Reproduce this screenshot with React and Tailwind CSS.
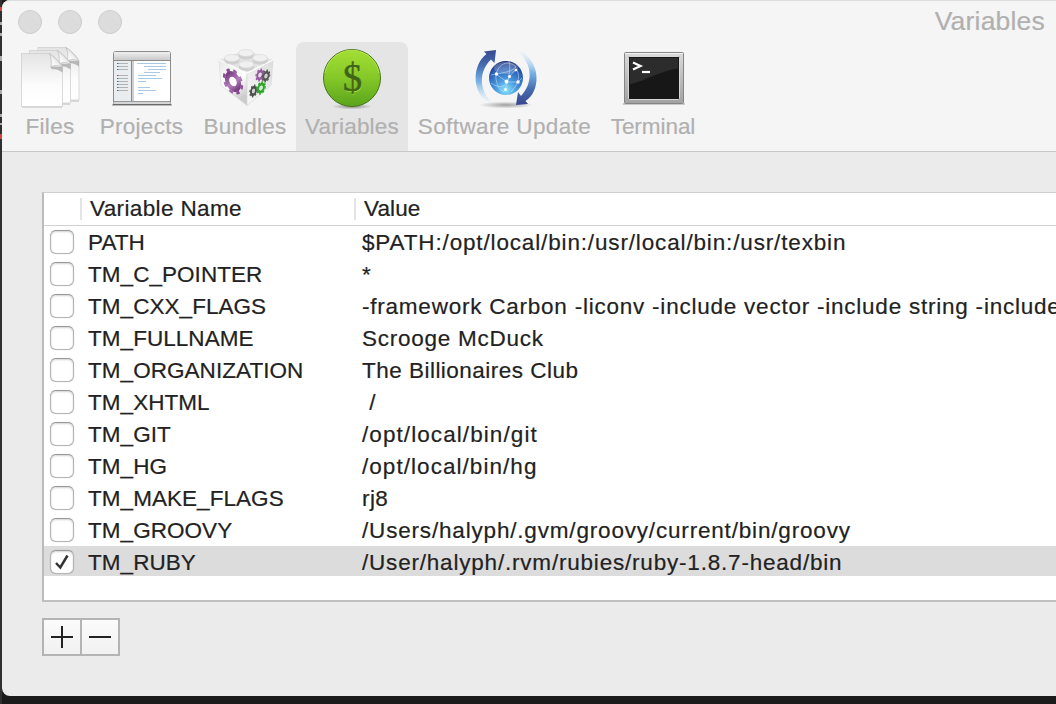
const rows = [
  { name: "PATH", value: "$PATH:/opt/local/bin:/usr/local/bin:/usr/texbin", spacing: "tracking-[0.85px]" },
  { name: "TM_C_POINTER", value: "*", spacing: "tracking-[0px]" },
  { name: "TM_CXX_FLAGS", value: "-framework Carbon -liconv -include vector -include string -include", spacing: "tracking-[0.77px]" },
  { name: "TM_FULLNAME", value: "Scrooge McDuck", spacing: "tracking-[0.75px]" },
  { name: "TM_ORGANIZATION", value: "The Billionaires Club", spacing: "tracking-[0.48px]" },
  { name: "TM_XHTML", value: " /", spacing: "tracking-[0.9px]" },
  { name: "TM_GIT", value: "/opt/local/bin/git", spacing: "tracking-[1.08px]" },
  { name: "TM_HG", value: "/opt/local/bin/hg", spacing: "tracking-[1.05px]" },
  { name: "TM_MAKE_FLAGS", value: "rj8", spacing: "tracking-[0.4px]" },
  { name: "TM_GROOVY", value: "/Users/halyph/.gvm/groovy/current/bin/groovy", spacing: "tracking-[0.82px]" },
  { name: "TM_RUBY", value: "/User/halyph/.rvm/rubies/ruby-1.8.7-head/bin", spacing: "tracking-[0.8px]", selected: true },
];

function Page({ x, y, h }) {
  return (
    <g transform={`translate(${x} ${y})`}>
      <path d={`M0 0H28C31 2 40 10 41 14V${h}H0Z`} fill="url(#paper)" stroke="#cdcdcd" strokeWidth="0.7" />
      <path d="M29 13L41 13.500V19C38 16.500 34 15.500 30 15.500Z" fill="#666" opacity="0.4" />
      <path d="M28 0C30 4 30 9 29.500 13.500C33 11.500 37 11.500 41 14C40 10 33 3 28 0Z" fill="url(#curl)" stroke="#b0b0b0" strokeWidth="0.6" />
    </g>
  );
}

function FilesIcon() {
  return (
    <svg width="64" height="68" viewBox="18 44 64 68">
      <defs>
        <linearGradient id="paper" x1="0" y1="0" x2="0" y2="1">
          <stop offset="0" stopColor="#e4e4e4" />
          <stop offset="0.6" stopColor="#fcfcfc" />
          <stop offset="1" stopColor="#fff" />
        </linearGradient>
        <linearGradient id="curl" x1="0" y1="1" x2="1" y2="0">
          <stop offset="0" stopColor="#fff" />
          <stop offset="0.4" stopColor="#f4f4f4" />
          <stop offset="1" stopColor="#a8a8a8" />
        </linearGradient>
      </defs>
      <path d="M22 107H62M62 104H70M70 101H79" stroke="#bbb" strokeWidth="1" />
      <Page x={38} y={47.5} h={52.5} />
      <Page x={29.5} y={50.5} h={52.5} />
      <Page x={21.5} y={53.5} h={53} />
    </svg>
  );
}

const codeLines = [
  [137, 63, 166], [144, 66, 166], [148, 69, 166], [144, 72, 160], [138, 75, 156],
  [138, 78, 162], [138, 81, 146], [138, 87, 150], [138, 90, 156], [138, 93, 143],
];

function ProjectsIcon() {
  return (
    <svg width="64" height="68" viewBox="110 44 64 68">
      <defs>
        <linearGradient id="bar" x1="0" y1="0" x2="0" y2="1">
          <stop offset="0" stopColor="#f0f0f0" />
          <stop offset="1" stopColor="#c9c9c9" />
        </linearGradient>
      </defs>
      <path d="M112 105H172" stroke="#aaa" strokeWidth="1.5" />
      <rect x="113.5" y="51.5" width="57" height="53" rx="2" fill="#fff" stroke="#8b8b8b" />
      <rect x="114" y="52" width="56" height="8" rx="1" fill="url(#bar)" />
      <path d="M114 60.5H170" stroke="#8c8c8c" />
      <rect x="114" y="61" width="17" height="40" fill="#e9edf0" />
      <rect x="131" y="61" width="3" height="40" fill="#cfcfcf" />
      <path d="M131.5 61V101" stroke="#888" />
      <rect x="114" y="101" width="56" height="3" fill="#d5d5d5" />
      <path d="M114 101.5H170" stroke="#999" />
      <path d="M113 104.5H171" stroke="#686868" />
      {[63, 66, 69, 75, 78, 81, 84, 87, 90].map((y) => (
        <g key={y}>
          <path d={`M118 ${y + 0.5}H128`} stroke="#b0b3b6" />
          <path d={`M117 ${y + 0.5}H118.4`} stroke={y === 75 ? "#c0392b" : "#2a7ab5"} />
        </g>
      ))}
      {codeLines.map(([a, y, b]) => (
        <path key={y} d={`M${a} ${y + 0.5}H${b}`} stroke="#a9c8e6" />
      ))}
    </svg>
  );
}

function Gear({ x, y, r, sx, color, skew, hole }) {
  return (
    <g transform={`translate(${x} ${y}) skewY(${skew}) scale(${sx} 1)`}>
      <circle r={r * 0.6} fill="none" stroke={color} strokeWidth={r * 0.46} />
      <circle r={r * 0.9} fill="none" stroke={color} strokeWidth={r * 0.26} strokeDasharray={`${r * 0.3534} ${r * 0.3534}`} />
      <circle r={r * 0.36} fill={hole} opacity="0.9" />
    </g>
  );
}

function Stud({ x, y }) {
  return (
    <g>
      <path d={`M${x - 7.5} ${y}V${y + 3}A7.5 3.6 0 0 0 ${x + 7.5} ${y + 3}V${y}Z`} fill="#cfcfcf" />
      <ellipse cx={x} cy={y} rx="7.5" ry="3.5" fill="#f0f0f0" stroke="#d6d6d6" strokeWidth="0.6" />
    </g>
  );
}

function BundlesIcon() {
  return (
    <svg width="64" height="68" viewBox="213 44 64 68">
      <defs>
        <linearGradient id="brickL" x1="0" y1="0" x2="0.4" y2="1">
          <stop offset="0" stopColor="#e8e8e8" />
          <stop offset="0.6" stopColor="#fff" />
          <stop offset="1" stopColor="#ccc" />
        </linearGradient>
        <linearGradient id="brickR" x1="1" y1="0" x2="0.4" y2="1">
          <stop offset="0" stopColor="#dcdcdc" />
          <stop offset="1" stopColor="#f6f6f6" />
        </linearGradient>
        <linearGradient id="plum" x1="0" y1="0" x2="1" y2="1">
          <stop offset="0" stopColor="#71347a" />
          <stop offset="0.55" stopColor="#b27fba" />
          <stop offset="1" stopColor="#6f2c79" />
        </linearGradient>
      </defs>
      <path d="M219 60L246 50L273 60L247 73Z" fill="#e3e3e3" />
      <path d="M219 60L247 73V105.500L221 85.500Z" fill="url(#brickL)" stroke="#d8d8d8" strokeWidth="0.6" />
      <path d="M273 60L247 73V105.500L271 85.500Z" fill="url(#brickR)" stroke="#d3d3d3" strokeWidth="0.6" />
      <path d="M219 60L247 73L273 60" fill="none" stroke="#fff" strokeWidth="1.2" />
      <Stud x={246} y={53} />
      <Stud x={232} y={58} />
      <Stud x={260} y={58} />
      <Stud x={246.5} y={64.5} />
      <Gear x={233} y={81.5} r={12} sx={0.82} skew={22} color="url(#plum)" hole="#fff" />
      <Gear x={260} y={75} r={6} sx={0.75} skew={-22} color="#94559d" hole="#e7d5ea" />
      <Gear x={266} y={76} r={6} sx={0.7} skew={-22} color="#555" hole="#ccc" />
      <Gear x={253.5} y={91} r={6} sx={0.7} skew={-22} color="#4c4c4c" hole="#ccc" />
      <Gear x={261} y={88} r={6.3} sx={0.75} skew={-22} color="#2da52b" hole="#c5edc2" />
    </svg>
  );
}

function VariablesIcon() {
  return (
    <svg width="64" height="68" viewBox="320 44 64 68">
      <defs>
        <linearGradient id="coin" x1="0" y1="0" x2="0" y2="1">
          <stop offset="0" stopColor="#a4df35" />
          <stop offset="0.5" stopColor="#84c827" />
          <stop offset="1" stopColor="#5ba41d" />
        </linearGradient>
        <radialGradient id="coinShade">
          <stop offset="0" stopColor="#000" stopOpacity="0.4" />
          <stop offset="1" stopColor="#000" stopOpacity="0" />
        </radialGradient>
      </defs>
      <ellipse cx="352" cy="106.5" rx="20" ry="3" fill="url(#coinShade)" />
      <circle cx="352" cy="78" r="28.5" fill="url(#coin)" stroke="#47761c" strokeWidth="1" />
      <path d="M325 73A27.4 27.4 0 0 1 379 73" fill="none" stroke="#c5f060" strokeWidth="1" opacity="0.6" />
      <text x="353" y="91.800" textAnchor="middle" className="font-['Liberation_Serif',serif] text-[39px]" fill="#a5df4a">$</text>
      <text x="352.400" y="91" textAnchor="middle" className="font-['Liberation_Serif',serif] text-[39px]" fill="#3f6516" stroke="#3f6516" strokeWidth="0.4">$</text>
    </svg>
  );
}

function UpdateIcon() {
  return (
    <svg width="64" height="68" viewBox="473 44 64 68">
      <defs>
        <radialGradient id="globe" cx="0.5" cy="0.85" r="0.85">
          <stop offset="0" stopColor="#8be6fb" />
          <stop offset="0.35" stopColor="#4a9be0" />
          <stop offset="0.75" stopColor="#2c5eb4" />
          <stop offset="1" stopColor="#1b2c6f" />
        </radialGradient>
        <linearGradient id="arcL" x1="0" y1="0" x2="0" y2="1">
          <stop offset="0" stopColor="#37468f" />
          <stop offset="0.3" stopColor="#466eb2" />
          <stop offset="0.6" stopColor="#79b2e6" />
          <stop offset="1" stopColor="#cfe4f8" stopOpacity="0.1" />
        </linearGradient>
        <linearGradient id="arcR" x1="0" y1="1" x2="0" y2="0">
          <stop offset="0" stopColor="#37468f" />
          <stop offset="0.3" stopColor="#466eb2" />
          <stop offset="0.6" stopColor="#79b2e6" />
          <stop offset="1" stopColor="#cfe4f8" stopOpacity="0.1" />
        </linearGradient>
        <radialGradient id="floorShade">
          <stop offset="0" stopColor="#000" stopOpacity="0.35" />
          <stop offset="1" stopColor="#000" stopOpacity="0" />
        </radialGradient>
      </defs>
      <ellipse cx="506" cy="105" rx="27" ry="3.5" fill="url(#floorShade)" />
      <path d="M496 50L484 51.500L486.500 54C473 64 472 88 484 99C486 101 489 103 493 103C479 92 478 72 491 59.500L494.500 63Z" fill="url(#arcL)" />
      <path d="M516 105L528 104L525.500 101C539 92 540 70 529 58C526 54 522 51 517 51C532 62 534 82 521 96L518 92Z" fill="url(#arcR)" />
      <circle cx="506" cy="78" r="17" fill="url(#globe)" />
      <ellipse cx="506" cy="68" rx="12" ry="6" fill="#fff" opacity="0.22" />
      <g fill="none" stroke="#d8efff" strokeWidth="0.7" opacity="0.7">
        <path d="M491 75C500 73 510 73 516 67C510 61 500 61 496 74C495 82 499 90 504 92" />
        <path d="M509 61C511 68 509 77 505 91M496 74L507 82L518 82L522 78M507 82L510 76L516 69C520 74 520 82 511 92M491 83C498 88 504 88 507 82" />
      </g>
      <g fill="#fff">
        <circle cx="496.500" cy="74" r="1.800" />
        <circle cx="509.500" cy="76.500" r="1.600" />
        <circle cx="506.500" cy="81.500" r="1.900" />
        <circle cx="518" cy="82" r="1.700" />
        <circle cx="516" cy="70" r="1.300" />
        <circle cx="505.500" cy="89.500" r="1.400" />
      </g>
    </svg>
  );
}

function TerminalIcon() {
  return (
    <svg width="64" height="68" viewBox="621 44 64 68">
      <defs>
        <linearGradient id="frame" x1="0" y1="0" x2="0" y2="1">
          <stop offset="0" stopColor="#dadada" />
          <stop offset="1" stopColor="#a2a2a2" />
        </linearGradient>
      </defs>
      <path d="M623 104H685" stroke="#bbb" strokeWidth="1.500" />
      <rect x="624.5" y="52.5" width="59" height="51" rx="1" fill="url(#frame)" stroke="#858585" />
      <path d="M625 53.500H683" stroke="#f4f4f4" />
      <rect x="628.5" y="56.500" width="51" height="43" rx="1" fill="#171717" stroke="#d8d8d8" />
      <path d="M630 58H678V68.500C660 71 647 80 630 84.500Z" fill="#2c2c2c" />
      <path d="M633 62.500L640.500 66L633 69.500" fill="none" stroke="#fff" strokeWidth="2.200" />
      <path d="M642 72H650" stroke="#fff" strokeWidth="2.200" />
    </svg>
  );
}

function Tool({ className, label, text, children }) {
  return (
    <div className={`flex shrink-0 flex-col items-center pt-0.5 ${className}`}>
      {children}
      <span className={`whitespace-nowrap leading-[30px] text-[#b0b0b0] ${text}`}>{label}</span>
    </div>
  );
}

function Checkbox({ checked }) {
  return (
    <span className="flex h-6 w-6 shrink-0 items-center justify-center rounded-[6px] border border-[#b5b5b5] border-t-[#999] bg-white shadow-[inset_0_1px_2px_rgba(0,0,0,0.18),0_0_1px_rgba(0,0,0,0.25)]">
      {checked && (
        <svg width="16" height="18" viewBox="0 0 16 18" className="shrink-0">
          <path d="M2 10L6.300 14.500L13.500 2.500" fill="none" stroke="#333" strokeWidth="2.500" />
        </svg>
      )}
    </span>
  );
}

export default function App() {
  return (
    <div className="flex h-[704px] w-[1056px] overflow-hidden bg-[#1b1b1b] font-['Liberation_Sans',Arial,sans-serif] text-[22.5px] text-[#222] [-webkit-text-stroke:0.2px]">
      <svg width="2" height="704" viewBox="0 0 2 704" className="shrink-0">
        <rect width="2" height="704" fill="#303030" />
        <path d="M1 7V11M1 134V139" stroke="#c44" strokeWidth="2" />
        <path d="M1 22V25M1 33V36M1 56V61M1 90V94M1 114V117M1 123V125" stroke="#aaa" strokeWidth="2" />
      </svg>
      <div className="flex h-[696px] w-[1054px] flex-col rounded-l-[8px] bg-[#ebebeb]">
        <header className="h-[152px] rounded-tl-[8px] border-b border-t border-b-[#c8c8c8] border-t-[#dcdcdc] bg-[#f5f5f5]">
          <div className="flex h-[41px] items-center pl-4 pr-[11px]">
            <div className="flex gap-4">
              <span className="h-6 w-6 rounded-full border border-[#cecece] bg-[#dcdcdc]" />
              <span className="h-6 w-6 rounded-full border border-[#cecece] bg-[#dcdcdc]" />
              <span className="h-6 w-6 rounded-full border border-[#cecece] bg-[#dcdcdc]" />
            </div>
            <h1 className="ml-auto text-[26.5px] tracking-[0.2px] text-[#b0b0b0]">Variables</h1>
          </div>
          <nav className="flex h-[109px] pl-[10px]">
            <Tool className="w-[76px]" label="Files" text="tracking-[0.3px]"><FilesIcon /></Tool>
            <Tool className="w-[107px]" label="Projects" text="tracking-[0.25px]"><ProjectsIcon /></Tool>
            <Tool className="w-[100px]" label="Bundles" text="tracking-[0.25px]"><BundlesIcon /></Tool>
            <Tool className="ml-px w-[112px] rounded-t-[8px] bg-[#e5e5e5]" label="Variables" text="tracking-[0.2px]"><VariablesIcon /></Tool>
            <Tool className="ml-px w-[191px]" label="Software Update" text="tracking-[0.38px]"><UpdateIcon /></Tool>
            <Tool className="w-[106px]" label="Terminal" text="tracking-[-0.05px]"><TerminalIcon /></Tool>
          </nav>
        </header>
        <main className="flex flex-1 flex-col items-start pl-10 pt-10">
          <section className="h-[410px] w-[1014px] border-b-2 border-l-2 border-t border-b-[#c0c0c0] border-l-[#bcbcbc] border-t-[#cfcfcf] bg-white">
            <div className="flex h-[33px] items-center border-b border-[#d0d0d0]">
              <div className="h-[22px] w-[38px] border-r-2 border-[#e4e4e4]" />
              <div className="flex h-[22px] w-[274px] items-center border-r-2 border-[#e4e4e4] pl-2 tracking-[0.37px]">Variable Name</div>
              <div className="pl-2 tracking-[0.1px]">Value</div>
            </div>
            {rows.map(({ name, value, spacing, selected }) => (
              <div key={name} className={`flex items-center pl-1.5 ${selected ? "h-[30px] bg-[#dcdcdc] pt-0.5" : "h-8"}`}>
                <Checkbox checked={selected} />
                <span className="w-[288px] shrink-0 pl-[14px] pt-0.5 leading-6 tracking-[0.05px]">{name}</span>
                <span className={`whitespace-pre pt-0.5 leading-6 ${spacing}`}>{value}</span>
              </div>
            ))}
          </section>
          <div className="mt-4 flex h-[38px] w-[78px] divide-x-2 divide-[#b4b4b4] border-2 border-[#b4b4b4] bg-gradient-to-b from-[#fbfbfb] to-[#f1f1f1]">
            <button className="flex w-[38px] shrink-0 items-center justify-center">
              <svg width="22" height="22" viewBox="0 0 22 22"><path d="M0 11H22M11 0V22" stroke="#222" strokeWidth="2" /></svg>
            </button>
            <button className="flex flex-1 items-center justify-center">
              <svg width="22" height="22" viewBox="0 0 22 22"><path d="M0 11H22" stroke="#222" strokeWidth="2" /></svg>
            </button>
          </div>
        </main>
      </div>
    </div>
  );
}
